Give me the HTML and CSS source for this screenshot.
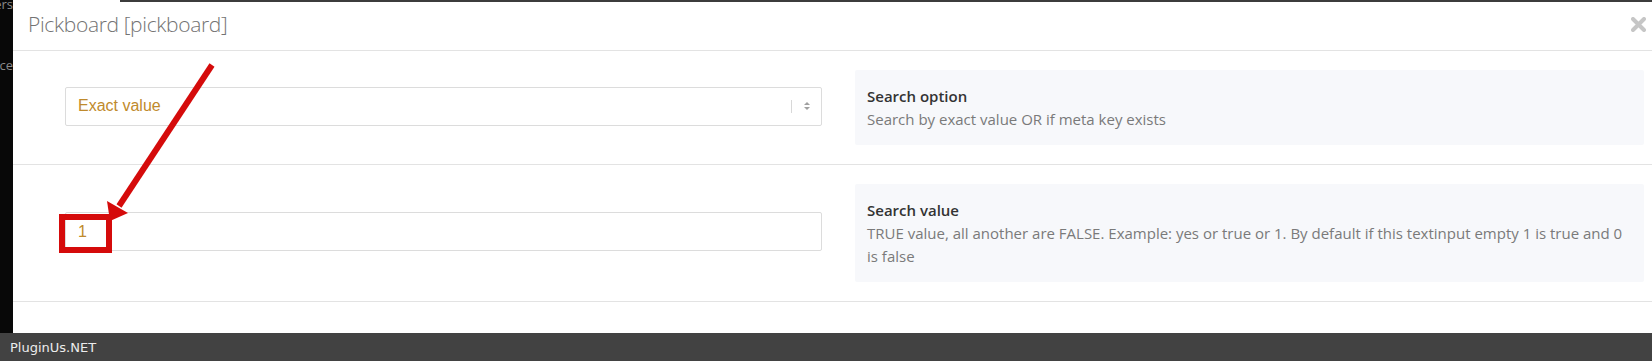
FILE: index.html
```html
<!DOCTYPE html>
<html>
<head>
<meta charset="utf-8">
<link rel="stylesheet" href="styles.css">
</head>
<body>
<div class="page">
  <div class="main">
    <div class="strip">
      <span class="frag frag-1">Users</span>
      <span class="frag frag-2">Source</span>
    </div>
    <div class="modal">
      <div class="topline"></div>
      <div class="modal-header">
        <h3 class="modal-title">Pickboard [pickboard]</h3>
        <span class="close" aria-label="close">
          <svg width="15" height="15" viewBox="0 0 15 15"><path d="M2 2 L13 13 M13 2 L2 13" stroke="#c6c6c6" stroke-width="4" stroke-linecap="round"/></svg>
        </span>
      </div>
      <div class="row">
        <div class="field">
          <div class="select">
            <span class="value">Exact value</span>
            <span class="sep"></span>
            <span class="arrows">
              <svg width="8" height="12" viewBox="0 0 8 12"><path d="M4 2 L7 5 L1 5 Z" fill="#a0a0a0"/><path d="M4 10 L7 7 L1 7 Z" fill="#a0a0a0"/></svg>
            </span>
          </div>
        </div>
        <div class="info">
          <div class="info-title">Search option</div>
          <div class="info-desc">Search by exact value OR if meta key exists</div>
        </div>
      </div>
      <div class="row">
        <div class="field">
          <div class="input"><span class="value">1</span></div>
        </div>
        <div class="info">
          <div class="info-title">Search value</div>
          <div class="info-desc">TRUE value, all another are FALSE. Example: yes or true or 1. By default if this textinput empty 1 is true and 0 is false</div>
        </div>
      </div>
      <div class="rest"></div>
    </div>
  </div>
  <div class="footer">PluginUs.NET</div>
  <svg class="annot" width="1652" height="361" viewBox="0 0 1652 361">
    <line x1="212" y1="65" x2="119" y2="206" stroke="#d50b0b" stroke-width="6"/>
    <polygon points="110,221 107,201 128,213" fill="#d50b0b"/>
    <rect x="62" y="217" width="47" height="33" fill="none" stroke="#d50b0b" stroke-width="6"/>
  </svg>
</div>
</body>
</html>
```

FILE: styles.css
```css
* { box-sizing: border-box; }
html, body { margin: 0; padding: 0; }
body {
  width: 1652px;
  height: 361px;
  overflow: hidden;
  background: #fff;
  font-family: "Open Sans", "Noto Sans", sans-serif;
}
.page {
  position: relative;
  display: flex;
  flex-direction: column;
  height: 361px;
}
.main {
  display: flex;
  height: 333px;
}
.strip {
  width: 13px;
  flex: none;
  background: #080808;
  display: flex;
  flex-direction: column;
  overflow: hidden;
  font-family: "Open Sans", sans-serif;
  font-size: 13px;
  color: #8a8a8a;
}
.frag {
  display: block;
  direction: rtl;
  white-space: nowrap;
  width: 13px;
  text-align: right;
  line-height: 14px;
}
.frag-1 { margin-top: -3px; }
.frag-2 { margin-top: 47px; }
.modal {
  flex: 1;
  display: flex;
  flex-direction: column;
  background: #fff;
}
.topline {
  height: 2px;
  background: linear-gradient(to right, #fff 107px, #3c3c3c 107px);
}
.modal-header {
  height: 49px;
  display: flex;
  align-items: center;
  justify-content: space-between;
  padding: 0 6px 0 15px;
  border-bottom: 1px solid #e3e3e3;
}
.modal-title {
  margin: 0;
  font-family: "Open Sans", sans-serif;
  font-weight: 300;
  font-size: 21px;
  color: #737373;
  letter-spacing: -0.35px;
  padding-bottom: 4px;
}
.close {
  display: flex;
  padding-bottom: 4px;
}
.close svg { display: block; }
.row {
  display: flex;
  align-items: center;
  padding: 19px 8px 19px 52px;
  border-bottom: 1px solid #e3e3e3;
  gap: 33px;
}
.field {
  flex: 1;
  padding-bottom: 3px;
}
.select, .input {
  height: 39px;
  border: 1px solid #dcdcdc;
  border-radius: 2px;
  display: flex;
  align-items: center;
  padding: 0 0 0 12px;
  font-family: "Liberation Sans", Arial, sans-serif;
  font-size: 16px;
  color: #bf8a2c;
  background: #fff;
}
.select .value { flex: 1; }
.sep {
  width: 1px;
  height: 13px;
  background: #d8d8d8;
}
.arrows {
  width: 29px;
  display: flex;
  justify-content: center;
  align-items: center;
}
.arrows svg { display: block; }
.info {
  width: 789px;
  flex: none;
  background: #f7f8fb;
  padding: 14px 10px 14px 12px;
  border-radius: 2px;
}
.info-title {
  font-family: "Open Sans", sans-serif;
  font-weight: 600;
  font-size: 15px;
  line-height: 24px;
  color: #333;
}
.info-desc {
  font-family: "Open Sans", sans-serif;
  font-size: 15px;
  line-height: 23px;
  color: #7a7a7a;
}
.rest { flex: 1; }
.footer {
  height: 28px;
  background: #424242;
  color: #ececec;
  font-family: "DejaVu Sans", sans-serif;
  font-size: 13px;
  display: flex;
  align-items: center;
  padding-left: 10px;
  padding-top: 1px;
}
.annot {
  position: absolute;
  left: 0;
  top: 0;
  pointer-events: none;
}
```
